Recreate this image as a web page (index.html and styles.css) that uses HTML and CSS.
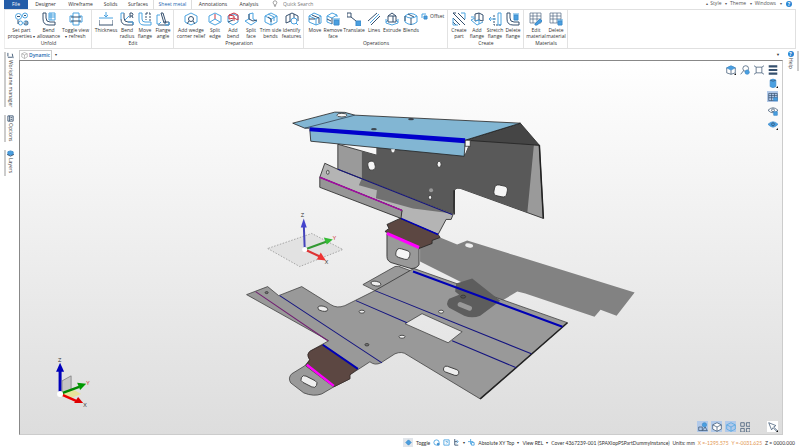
FILE: index.html
```html
<!DOCTYPE html>
<html lang="en">
<head>
<meta charset="utf-8">
<title>Sheet metal</title>
<link rel="stylesheet" href="styles.css">
</head>
<body>
<svg class="defs" aria-hidden="true">
  <defs>
    <symbol id="cube" viewBox="0 0 14 14"><path d="M7 1 12.500 3.500V10L7 13 1.500 10V3.500ZM1.500 3.500 7 6 12.500 3.500M7 6V13"/></symbol>
  </defs>
</svg>
<div class="app">
  <header>
    <nav class="menu">
      <button class="menu-tab file">File</button>
      <button class="menu-tab">Designer</button>
      <button class="menu-tab">Wireframe</button>
      <button class="menu-tab short">Solids</button>
      <button class="menu-tab narrow">Surfaces</button>
      <button class="menu-tab active">Sheet metal</button>
      <button class="menu-tab wide">Annotations</button>
      <button class="menu-tab narrow">Analysis</button>
      <label class="search"><svg viewBox="0 0 6 8"><path d="M2 5C0 3 1 1 3 1s3 2 1 4v1H2ZM2 7h2"/></svg><input type="text" placeholder="Quick Search" aria-label="Quick Search"></label>
      <div class="window-menu">
        <button><i>▴</i> &nbsp;Style</button>
        <button><i>▾</i> &nbsp;Theme</button>
        <button><i>▾</i> &nbsp;Windows</button>
        <i>▾</i><button class="help-dot" aria-label="Help">?</button>
      </div>
    </nav>
    <div class="ribbon">
      <section class="group first">
        <div class="tools">
          <button class="tool w27"><svg viewBox="0 0 14 14"><circle class="l" cx="3.500" cy="4.500" r="3"/><circle class="l" cx="10" cy="3.500" r="2.500"/><circle class="l" cx="5.500" cy="11" r="2"/><circle class="l" cx="11" cy="11" r="2.200"/><path d="M2 4.500h3M9 3.500h2M3 8v4M10 10h3M9 12h4"/></svg><span>Set part<br>properties <i>▾</i></span></button>
          <button class="tool w27"><svg viewBox="0 0 14 14"><path d="M1 1v6q0 6 6 6h6v-3H8Q4 10 4 6V1Z"/><path class="l" d="M7 1h6v7H7ZM7 3h6M7 5h6M9 1v7"/></svg><span>Bend<br>allowance</span></button>
          <button class="tool w27"><svg viewBox="0 0 14 14"><path class="l" d="M4 1h6v3h3v6h-3v3H4v-3H1V4h3Z"/><path class="l" d="M4 4v6M10 4v6"/><path d="M2 5h10M2 9h10"/></svg><span>Toggle view<br><i>▾</i> refresh</span></button>
        </div><h2>Unfold</h2>
      </section>
      <section class="group">
        <div class="tools">
          <button class="tool w24"><svg viewBox="0 0 14 14"><path class="l" d="M0 6h14M7 0v4M5 3l2 2 2-2"/><path d="M0 8v5h14V8"/></svg><span>Thickness</span></button>
          <button class="tool"><svg viewBox="0 0 14 14"><path d="M1 7q0 6 6 6h6v-3H8Q4 10 4 6V1"/><path class="l" d="M4 1H1v6M8 10h5v3M5 8l4-4"/><path d="M10 6V1h2q2 1 0 3h-2M12 4l1 2"/></svg><span>Bend<br>radius</span></button>
          <button class="tool"><svg viewBox="0 0 14 14"><path class="l" d="M1 1v7q0 5 5 5h7v-3H7q-3 0-3-3V1Z"/><path class="dash" d="M8 1v7M12 1v8M8 1h4"/></svg><span>Move<br>flange</span></button>
          <button class="tool"><svg viewBox="0 0 14 14"><path d="M5 1h2l3 10H8ZM8 10h5v3H2"/><path class="l" d="M4 3H1v9q2 1 4-2M9 13h4v-3"/></svg><span>Flange<br>angle</span></button>
        </div><h2>Edit</h2>
      </section>
      <section class="group">
        <div class="tools">
          <button class="tool w30"><svg viewBox="0 0 14 14"><path class="l" d="m7 1 6 3v6l-6 3-6-3V4Z"/><circle cx="7" cy="7" r="2.500"/><path d="M5 9 3 12M9 9l2 3"/></svg><span>Add wedge<br>corner relief</span></button>
          <button class="tool"><svg class="light" viewBox="0 0 14 14"><path d="m7 1 6 3v6l-6 3-6-3V4Z"/><path class="red" d="M7 2v5"/><path d="m7 7 5 3M7 7l-5 3"/></svg><span>Split<br>edge</span></button>
          <button class="tool"><svg viewBox="0 0 14 14"><path class="l" d="m7 2 5 2v6l-5 3-5-3V4Z"/><path class="red" d="m3 3 5-2 4 2v5L8 6 3 7ZM3 3l5 1v5"/><path d="m2 10 5-2"/></svg><span>Add<br>bend</span></button>
          <button class="tool"><svg viewBox="0 0 14 14"><path class="l" d="M5 7V2l4-1v6l4 2-6 4-6-4 4-2"/><path d="m5 7 4 2 4-1M5 2v5"/></svg><span>Split<br>face</span></button>
          <button class="tool w21"><svg class="light" viewBox="0 0 14 14"><path d="m1 4 6-3 6 3v6l-6 3-6-3ZM1 4l6 3 6-3M7 7v6M4 2l6 3v4"/><path class="dark" d="m4 5 3 2v3"/></svg><span>Trim side<br>bends</span></button>
          <button class="tool w21"><svg viewBox="0 0 14 14"><path d="m1 4 6-3 6 3v5M1 4v7l5-2M5 2v7M9 2v4"/><circle class="l" cx="9" cy="9" r="3"/><path class="l" d="m11 11 2 2"/></svg><span>Identify<br>features</span></button>
        </div><h2>Preparation</h2>
      </section>
      <section class="group">
        <div class="tools">
          <button class="tool"><svg viewBox="0 0 14 14"><path class="l" d="m1 4 5-3 7 3v7l-5 2-7-3ZM1 4l7 3 5-3M8 7v6"/><path d="m4 3 7 3v5M1 7h6"/></svg><span>Move</span></button>
          <button class="tool"><svg viewBox="0 0 14 14"><path class="l" d="m1 4 5-3 5 2v2M1 4v6l5 2M1 4l5 2 5-3"/><path d="M6 6v6M1 7l4 2"/><path class="fill" d="M8 8h5v5H8Z"/><path class="l" d="M7 7h7"/></svg><span>Remove<br>face</span></button>
          <button class="tool w24"><svg viewBox="0 0 14 14"><path d="M0 1h4v4H0Zm4 4 5 4"/><path class="fill" d="M9 9h5v5H9Z"/></svg><span>Translate</span></button>
          <button class="tool w16"><svg viewBox="0 0 14 14"><path d="M1 9 10 1M4 13 13 4"/><path class="l" d="M3 11 12 2"/></svg><span>Lines</span></button>
          <button class="tool w20"><svg viewBox="0 0 14 14"><path class="l" d="M1 7v4l6 2 6-2V7M1 10l2-2M13 10l-2-2"/><path d="m3 4 4-3 4 3v6H3ZM3 4h8M8 4v6"/></svg><span>Extrude</span></button>
          <button class="tool"><svg viewBox="0 0 14 14"><path class="l" d="M1 4q6-5 12 0v6q-6 5-12 0ZM1 4q6 4 12 0"/><path d="M7 6v7M4 2l6 3M1 4v5"/></svg><span>Blends</span></button>
          <button class="tool-small"><svg viewBox="0 0 7 7"><path class="fill" d="M3 3h3v3H3Z"/><path class="l" d="M1 5V1h4"/></svg>Offset</button>
        </div><h2>Operations</h2>
      </section>
      <section class="group">
        <div class="tools">
          <button class="tool"><svg viewBox="0 0 14 14"><path d="m1 1 12 12M6 1l7 7M1 6l7 7M1 1h3M1 10l3 3"/><path class="l" d="M1 6v7M13 1v6M9 1h4M1 13h5"/></svg><span>Create<br>part</span></button>
          <button class="tool"><svg viewBox="0 0 14 14"><path d="m5 2 4-1 4 2v6L9 8 5 9ZM9 1v7"/><path class="l" d="M5 6 1 8l6 5 6-3M5 9l4-1v4M1 5h3"/></svg><span>Add<br>flange</span></button>
          <button class="tool"><svg viewBox="0 0 14 14"><path class="dash" d="M6 3v10h7"/><path class="l" d="M10 1h3v12h-3ZM8 7H1M3 5 1 7l2 2"/></svg><span>Stretch<br>flange</span></button>
          <button class="tool"><svg viewBox="0 0 14 14"><path d="M1 1v6q0 6 6 6h6v-3H8Q4 10 4 6V1Z"/><path class="fill" d="M8 3h4v5H8Z"/><path class="l" d="M7 2h6"/></svg><span>Delete<br>flange</span></button>
        </div><h2>Create</h2>
      </section>
      <section class="group">
        <div class="tools">
          <button class="tool w20"><svg viewBox="0 0 14 14"><path class="grid-lines" d="M1 1h11v10H1ZM1 4h11M1 7h11M4 1v10M8 1v10"/><path class="fill" d="m6 12 5-5 2 2-5 4H6Z"/></svg><span>Edit<br>material</span></button>
          <button class="tool w20"><svg viewBox="0 0 14 14"><path class="grid-lines" d="M1 1h11v10H1ZM1 4h11M1 7h11M4 1v10M8 1v10"/><path class="fill" d="M9 9h4v4H9Z"/><path class="l" d="M8 8h6"/></svg><span>Delete<br>material</span></button>
        </div><h2>Materials</h2>
      </section>
    </div>
  </header>

  <div class="work">
    <aside class="side">
      <button class="side-tab tall"><svg viewBox="0 0 8 8"><path d="M1 5V1M1 6h5M6 2l1 5"/></svg>Workplane manager</button>
      <button class="side-tab"><svg viewBox="0 0 8 8"><path d="M1 1h6v6H1ZM3 1v6M4 3h2M4 5h2"/></svg>Options</button>
      <button class="side-tab"><svg viewBox="0 0 8 8"><path class="fill" d="m4 1 3 1v3L4 6 1 5V2Z"/><path d="m0 5 4 2 4-2"/></svg>Layers</button>
    </aside>
    <main>
      <div class="doc-tabs">
        <button class="doc-tab"><svg><use href="#cube"/></svg>Dynamic</button>
        <button class="doc-more" aria-label="Add view">▾</button>
        <button class="doc-list" aria-label="View list">▼</button>
      </div>
      <div class="viewport">
        <svg class="scene" viewBox="20 61 762 372" preserveAspectRatio="xMidYMid slice" role="img" aria-label="Folded and unfolded sheet metal part">
          <!-- ground shadow -->
          <path fill="#828282" d="M420 238 440 237 457 244 467 240 480 244 634 292 616 315 600 309 594 316 525 293 517 291 500 301 420 261Z"/>
          <ellipse cx="469" cy="245" rx="4" ry="2" fill="#eee" transform="rotate(12 469 245)"/>
          <!-- unfolded sheet -->
          <path fill="#999" stroke="#444" stroke-width=".8" fill-rule="evenodd" d="M247 294 268 286 279 295 302 286 331 304Q337 308 345 305L375 290 363 284 395 266Q399 265 402 267L410 270 414 268 567 322 480 398 407 354Q402 350 395 353L381 362Q375 365 370 361L350 374V378L334 386 322 393Q314 396 304 392L291 382Q288 377 292 373L305 365 310 359Q306 353 311 350L329 340Z M405 323 422 313 462 331 448 342Z"/>
          <path d="m567 322-87 76" stroke="#222" stroke-width="1.500"/>
          <path fill="#5d5d5d" d="M456 283 472 278 500 300 480 315Q472 318 464 315L449 307Q445 303 449 298L459 294 455 291Z"/>
          <path fill="#5c4742" stroke="#332522" stroke-width=".7" d="m323 344 35 24-8 6v4l-16 8-28-21 4-6Q306 353 311 350Z"/>
          <g fill="none" stroke="#151580">
            <path d="m280 295 102 67M375 290l156 63M356 300l51 22M452 340l64 27"/>
            <path stroke="#0000b5" stroke-width="2" d="m413 271 149 55M323 344l35 24"/>
            <path stroke="#711e71" d="m256 291 72 49"/>
            <path stroke="#f0f" stroke-width="2.500" d="m307 364 27 21"/>
            <path stroke="#333" stroke-width=".8" d="m375 290 35-20"/>
          </g>
          <g fill="#eee" stroke="#333" stroke-width=".8">
            <ellipse cx="323" cy="308" rx="5" ry="2.500" transform="rotate(10 323 308)"/>
            <ellipse cx="376" cy="283" rx="5" ry="2.300" transform="rotate(8 376 283)"/>
            <ellipse cx="362" cy="311" rx="2.800" ry="1.500"/><ellipse cx="402" cy="336" rx="3" ry="1.500"/>
            <ellipse cx="267" cy="292" rx="1.500" ry="1" fill="#777"/><ellipse cx="367" cy="344" rx="2" ry="1.200" fill="#777"/>
            <ellipse cx="441" cy="311" rx="2.500" ry="1.500"/><ellipse cx="463" cy="296" rx="2.500" ry="1.500" fill="#555"/>
            <rect x="443" y="367" width="16" height="6" rx="3" transform="rotate(20 451 370)"/>
            <rect x="301" y="377" width="17" height="7" rx="3.500" transform="rotate(27 309 380)"/>
            <rect x="457" y="303" width="15" height="5" rx="2.500" fill="#999" stroke="none" transform="rotate(22 464 306)"/>
          </g>
          <!-- folded sheet -->
          <g stroke="#222" stroke-width=".8" stroke-linejoin="round">
            <path fill="#9a9a9a" d="M338 144 377 155V147L465 155 471 140 539 145 543 218 460 188Q454 187 454 192L453 213 338 170Z"/>
            <path fill="#595959" stroke="none" d="M362 151 377 155V145L465 154 471 140H534L527 212 460 188Q454 187 454 192L453 213 362 179Z"/>
            <path fill="#454545" d="m520 123 19 22-74-5Z"/>
            <path fill="#b4b4b4" d="m325 163 13 6 115 45-2 5h-5l-8 15-38-16 2-8-82-33Z"/>
            <path fill="#717171" stroke="none" d="M362 178 452 213 413 208 376 198 377 190 359 185Z"/>
            <path fill="#969696" d="m320 177 82 33-1 8-81-31Z"/>
            <path fill="#5c4742" d="m400 218 38 16 2 3-8 3v3l-13 5-32-16-2-1 4-3-2-4Z"/>
            <path fill="#999" d="m387 233 32 14v17q-2 4-8 4l-20-6q-4-2-4-6Z"/>
            <path fill="#82b6d3" d="m293 123 42-11q10-1 20 3l165 8-55 17-155-12h-5Z"/>
            <path fill="#82b6d3" d="m310 129 155 12-1 15-153-15Z"/>
          </g>
          <path fill="#00c" d="m310 127 155 11v5l-155-12Z"/>
          <g fill="none">
            <path stroke="#15157c" d="m338 169 114 45"/><path stroke="#0000b5" stroke-width="1.500" d="m401 218 37 16"/>
            <path stroke="#a20ba2" stroke-width="1.500" d="m320 177 82 33"/><path stroke="#f0f" stroke-width="3" d="m387 233 32 14"/>
            <path stroke="#345" stroke-width=".8" d="m305 128 50-13"/>
            <path stroke="#222" stroke-width="1.500" d="M454 190v24M539 145l4 73"/>
          </g>
          <g fill="#f5f5f5" stroke="#333" stroke-width=".8">
            <ellipse cx="342" cy="115" rx="5" ry="1.800"/><ellipse cx="374" cy="129" rx="2.500" ry=".6" fill="#457"/><ellipse cx="411" cy="119" rx="2.500" ry=".6" fill="#457"/>
            <rect x="368" y="161" width="7" height="9" rx="3" transform="rotate(-14 371 165)"/><ellipse cx="439" cy="164" rx="2" ry="3"/><ellipse cx="430" cy="197" rx="1.500" ry="2.200"/><circle cx="431" cy="190" r="2" fill="#999" stroke="none"/>
            <rect x="494" y="185" width="13" height="11" rx="4" transform="rotate(12 500 190)"/><ellipse cx="328" cy="172" rx="1.300" ry="2" fill="#ddd"/>
            <rect x="465" y="140" width="5" height="6"/><rect x="396" y="249" width="14" height="9" rx="4" transform="rotate(17 403 253)"/><path stroke="none" d="M391 149h4l-1 3h-2Z"/>
          </g>
          <!-- work plane and axes -->
          <path fill="#e2e2e2" stroke="#888" stroke-width=".7" stroke-dasharray="1.500 1.500" d="m268 248 32 18 43-17-31-16Z"/>
          <g fill="none" stroke-width="2">
            <path stroke="#44b" d="m305 249-1-26"/><path stroke="#393" d="m305 249 22-8"/><path stroke="#d33" d="m305 249 15 7"/>
            <path stroke="#00b" stroke-width="3" d="M61 393v-24"/>
          </g>
          <path fill="#44c" d="m304 218 3 9h-6Z"/><path fill="#3b3" d="m333 239-9-2 3 7Z"/><path fill="#e33" d="m326 260-5-8-4 7Z"/><circle cx="305" cy="249" r="2.500" fill="#fff"/>
          <path fill="#bbb" fill-opacity=".7" stroke="#777" stroke-width=".7" d="m63 380 9-5v18l-9 1Z"/><path fill="#e8e49b" d="m62 392 13-3 7 4-10 4Z"/>
          <path stroke="#080" stroke-width="2.500" d="m61 393 19-7"/><path stroke="#e00" stroke-width="2.500" d="m61 393 16 7"/>
          <path fill="#00b" d="m61 362 4 9h-8Z"/><path fill="#090" d="m87 383-9-1 3 7Z"/><path fill="#d00" d="m84 402-5-6-4 6Z"/><circle cx="61" cy="393" r="3" fill="#fff"/>
          <g class="axis-label"><text x="301" y="217">Z</text><text class="y" x="333" y="240">Y</text><text x="325" y="263">X</text><text x="59" y="361">Z</text><text class="y" x="87" y="384">Y</text><text x="84" y="406">X</text></g>
        </svg>
        <div class="view-tools top">
          <button class="corner" aria-label="Orientation"><svg viewBox="0 0 14 14"><path d="m1 4 6-2 6 2v7l-6 2-6-2ZM7 7v6"/><path class="fill" d="m1 4 6-3 6 3-6 3Z"/></svg></button>
          <button aria-label="Zoom"><svg viewBox="0 0 14 14"><circle cx="8" cy="5" r="4"/><path d="m5 8-4 5"/><circle class="fill" cx="10" cy="10" r="3"/></svg></button>
          <button aria-label="Fit"><svg viewBox="0 0 14 14"><path d="M3 3h8v8H3ZM0 1l3 2M14 1l-3 2M0 13l3-2M14 13l-3-2"/></svg></button>
          <button aria-label="Menu"><svg viewBox="0 0 14 14"><path class="heavy" d="M1 2h12M1 7h12M1 12h12"/></svg></button>
        </div>
        <div class="view-tools column">
          <button class="corner" aria-label="Shading"><svg viewBox="0 0 14 14"><path class="fill" d="M3 3q4-3 8 0v9q-4 3-8 0Z"/><path d="M3 3q4 3 8 0"/></svg></button>
          <button class="on" aria-label="Grid"><svg viewBox="0 0 14 14"><path d="M1 2h12v10H1ZM1 5h12M1 8h12M5 2v10M9 2v10"/><path class="fill" d="M8 8h5v4H8Z"/></svg></button>
          <button aria-label="Show"><svg viewBox="0 0 14 14"><path d="M0 6q7-7 14 0-7 7-14 0Z"/><circle cx="7" cy="6" r="2"/><path class="fill" d="M8 8h5v5H8Z"/></svg></button>
          <button class="corner" aria-label="Hide"><svg viewBox="0 0 14 14"><path class="fill" d="M0 6q7-7 14 0-7 8-14 0Z"/><circle cx="7" cy="6" r="2"/></svg></button>
        </div>
        <div class="view-tools bottom">
          <button class="on" aria-label="Selection"><svg viewBox="0 0 14 14"><path d="M1 7h5v5H1Z"/><circle class="fill" cx="9" cy="4" r="3"/><path d="m6 12 4-5 3 5Z"/></svg></button>
          <button class="on" aria-label="Wireframe"><svg viewBox="0 0 14 14"><path fill="#fff" d="m7 1 6 3v6l-6 3-6-3V4Z"/><path d="m1 4 6 3 6-3M7 7v6"/></svg></button>
          <button class="on" aria-label="Shaded"><svg class="light" viewBox="0 0 14 14"><path d="m7 1 6 3v6l-6 3-6-3V4ZM1 4l6 3 6-3M7 7v6"/></svg></button>
          <button aria-label="Split views"><svg viewBox="0 0 14 14"><path d="M1 1h5v5H1ZM9 1h5v5H9ZM1 9h5v5H1ZM9 9h5v5H9Z"/></svg></button>
          <button class="pick corner" aria-label="Pick"><svg viewBox="0 0 14 14"><path d="m1 1 10 4-3 2 5 5-1 1-5-5-2 3Z"/></svg></button>
        </div>
      </div>
    </main>
    <aside class="side right"><button class="side-tab"><b class="help-dot">?</b>Help</button></aside>
  </div>

  <footer>
    <button class="toggle" aria-label="Toggle"><svg viewBox="0 0 8 8"><path class="fill" d="m4 1 3 3-3 3-3-3Z"/></svg></button><span>Toggle</span>
    <svg class="light" viewBox="0 0 8 8"><circle cx="4" cy="4" r="3"/><path class="fill" d="M5 5h2v2H5Z"/></svg>
    <svg viewBox="0 0 8 8"><path class="l" d="M1 1h6v6H1ZM3 3h2v1L4 5"/></svg>
    <svg viewBox="0 0 8 8"><path d="M2 0v7h4M2 3h3"/><path class="l" d="m4 1 2 2-2 2"/></svg><i>▾</i>
    <svg viewBox="0 0 8 8"><path class="l" d="M0 3h6M3 0v6M4 4h3v3H4Z"/></svg>
    <span>Absolute XY Top</span><i>▾</i><span>View REL</span><i>▾</i><span>Cover 4367239-001 (SPAXIopPSPartDummyInstance)</span>
    <span>Units: mm</span><span class="coord">X =-1295.575</span><span class="coord">Y =-0031.625</span><span>Z = 0000.000</span>
  </footer>
</div>
</body>
</html>
```
FILE: styles.css
```css
* { box-sizing: border-box; }
body { margin: 0; font: 5px/6px "Open Sans", "Noto Sans", sans-serif; color: #333; background: #fff; }
button, input { font: inherit; color: inherit; margin: 0; padding: 0; border: 0; background: none; }
i { font-style: normal; font-size: 4px; }
svg { fill: none; stroke: #36506e; stroke-width: 1; flex: none; }
.l, .light { stroke: #4ba3e0; }
.dark { stroke: #36506e; }
.red { stroke: #cc3542; }
.fill { fill: #4a9fe0; stroke: #3c8ccc; }
.dash { stroke-dasharray: 2 1; }
.grid-lines { stroke-width: 0.6px; }
.heavy { stroke-width: 3; }
.defs { position: absolute; width: 0; height: 0; }
.app { min-height: 100vh; display: flex; flex-direction: column; padding-left: 4px; }

.menu { display: flex; height: 9px; align-items: stretch; }
.menu-tab { width: 35px; line-height: 6px; padding-bottom: 2px; }
.menu-tab.narrow { width: 30px; }
.menu-tab.short { width: 25px; }
.menu-tab.wide { width: 42px; }
.menu-tab.file { width: 24px; background: #245da8; color: #fff; }
.menu-tab.active { width: 39px; color: #1b67b0; border: 1px solid #ddd; border-width: 0 1px; }
.search { display: flex; align-items: center; gap: 5px; padding: 0 0 2px 8px; }
.search svg { width: 6px; height: 7px; stroke: #888; }
.search input { width: 40px; height: 7px; }
.search input::placeholder { color: #777; opacity: 1; }
.window-menu { margin-left: auto; display: flex; align-items: center; gap: 4px; padding: 0 8px 2px 0; color: #555; }
.help-dot { width: 6px; height: 6px; border-radius: 50%; background: #2b86d4; color: #fff; line-height: 6px; font-weight: 700; text-align: center; }

.ribbon { display: flex; height: 40px; margin-right: 4px; border: 1px solid #e0e0e0; border-left-color: #eee; }
.group { display: flex; flex-direction: column; justify-content: space-between; padding: 2px 1px 2px 2px; border-right: 1px solid #e2e2e2; }
.group.first { padding-left: 3px; padding-right: 2px; }
.group h2 { margin: 0; font: inherit; text-align: center; }
.tools { display: flex; align-items: flex-start; }
.tool { width: 18px; display: flex; flex-direction: column; align-items: center; gap: 1px; white-space: nowrap; line-height: 6px; }
.tool svg { width: 14px; height: 14px; }
.w16 { width: 16px; } .w20 { width: 20px; } .w21 { width: 21px; }
.w24 { width: 24px; } .w27 { width: 27px; } .w30 { width: 30px; }
.tool-small { display: flex; align-items: center; gap: 2px; width: 26px; height: 8px; padding-left: 1px; }
.tool-small svg { width: 7px; height: 7px; }

.work { flex: 1; display: flex; }
.side { width: 15px; padding-top: 3px; display: flex; flex-direction: column; align-items: flex-start; gap: 8px; }
.side-tab { writing-mode: vertical-rl; display: flex; align-items: center; min-height: 26px; width: 11px; border-left: 2px solid #ccc; gap: 1px; color: #444; }
.side-tab.tall { min-height: 55px; }
.side-tab svg { width: 7px; height: 7px; }
.side.right { width: 17px; padding-top: 2px; align-items: center; }
.right .side-tab { border-left: 0; border-right: 2px solid #ccc; min-height: 20px; width: 14px; }
.side-tab .help-dot { writing-mode: horizontal-tb; }
main { flex: 1; min-width: 0; display: flex; flex-direction: column; }
.doc-tabs { height: 11px; display: flex; align-items: center; }
.doc-tab { height: 10px; display: flex; align-items: center; gap: 1px; padding: 0 1px; border: 1px solid #ccc; border-bottom: 0; color: #1b67b0; font-weight: 600; }
.doc-tab svg { width: 7px; height: 7px; stroke: #888; }
.doc-more { margin-left: 3px; font-size: 4px; }
.doc-list { margin-left: auto; margin-right: 3px; font-size: 4px; }
.viewport { flex: 1; position: relative; border: 1px solid #888; border-right-color: #ccc; border-bottom-color: #ccc; background: linear-gradient(#fff, #ddd); overflow: hidden; }
.scene { position: absolute; inset: 0; width: 100%; height: 100%; stroke: none; }
.axis-label { font-size: 6px; fill: #333; }
.axis-label .y { fill: #c33; }

.view-tools { position: absolute; display: flex; gap: 3px; }
.view-tools button { width: 11px; height: 11px; display: grid; place-items: center; position: relative; }
.view-tools svg { width: 10px; height: 10px; }
.view-tools.top { top: 3px; right: 4px; }
.view-tools.column { top: 16px; right: 4px; flex-direction: column; }
.view-tools.bottom { right: 4px; bottom: 2px; }
.view-tools .on { background: #b2caea; }
.view-tools .pick { background: #fff; margin-left: 14px; }
.corner::after { content: ""; position: absolute; right: 0; bottom: 0; border: 1px solid #111; border-top-color: transparent; border-left-color: transparent; }

footer { height: 13px; display: flex; align-items: center; justify-content: flex-end; gap: 3px; padding: 2px 5px 0 0; white-space: nowrap; font-family: Lato, "Open Sans", sans-serif; }
footer svg { width: 7px; height: 7px; display: block; }
.toggle { width: 10px; height: 9px; display: grid; place-items: center; background: #e2e6eb; }
.coord { color: #e29550; }
```
